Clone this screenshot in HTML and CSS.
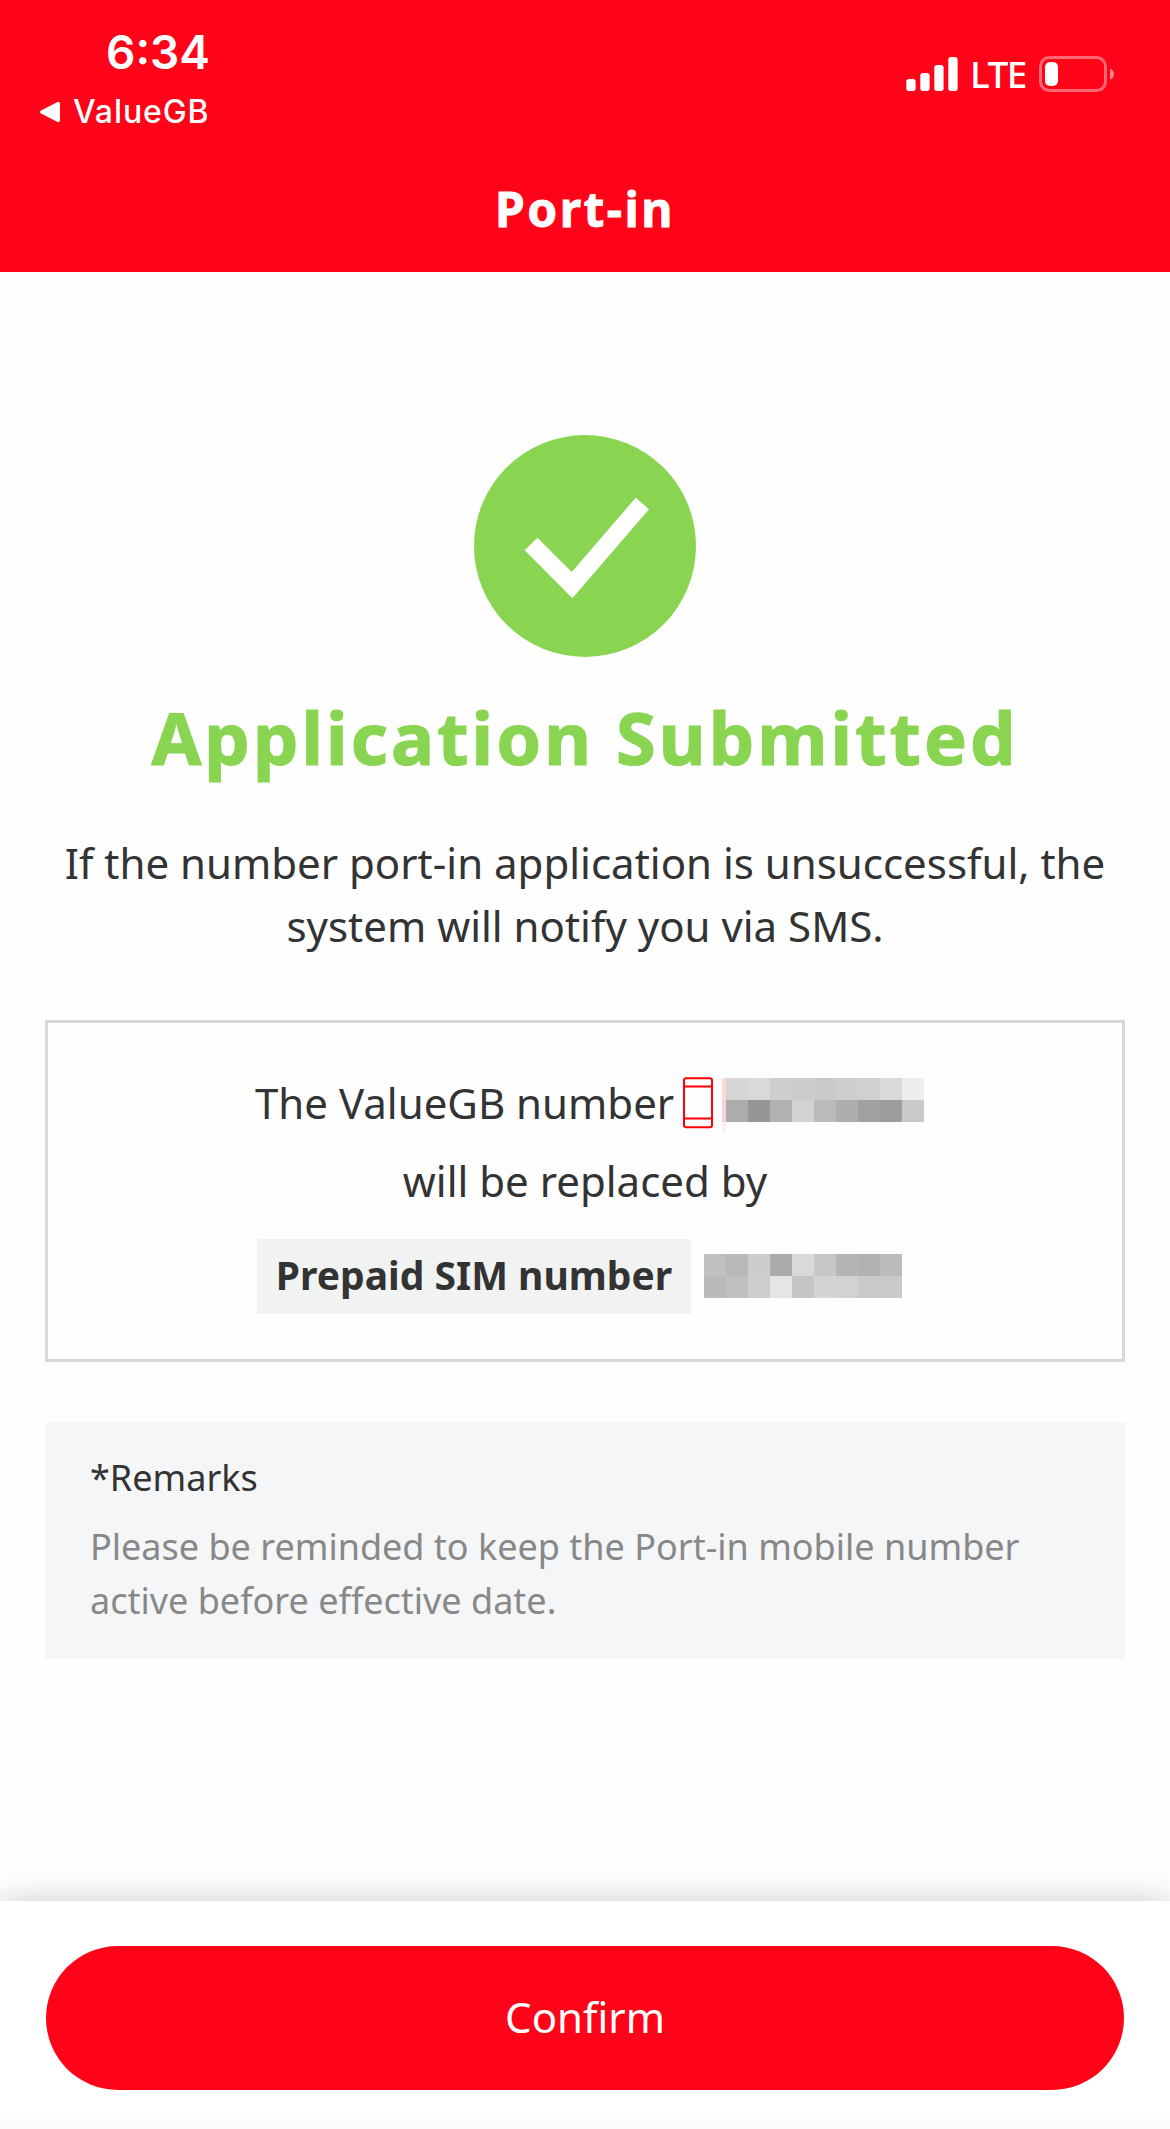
FILE: index.html
```html
<!DOCTYPE html>
<html lang="en">
<head>
    <meta charset="UTF-8">
    <meta name="viewport" content="width=device-width, initial-scale=1.0">
    <title>Port-in</title>
    <link rel="stylesheet" href="styles.css">
</head>
<body>
    <header class="header">
        <div class="status-bar">
            <div class="status-left">
                <div class="time">6:34</div>
                <div class="back-app">
                    <svg width="22" height="22" viewBox="0 0 22 22">
                        <path d="M2 9.5 L18 1.2 Q21 0 21 3 V19 Q21 22 18 20.8 L2 12.5 Q0 11 2 9.5Z" fill="#fff"/>
                    </svg>
                    <span>ValueGB</span>
                </div>
            </div>
            <div class="status-right">
                <svg class="signal" width="52" height="36" viewBox="0 0 52 36" fill="#fff">
                    <rect x="0.3" y="23" width="9.3" height="12" rx="2.8"/>
                    <rect x="14.3" y="17" width="9.3" height="18" rx="2.8"/>
                    <rect x="28.3" y="9" width="9.3" height="26" rx="2.8"/>
                    <rect x="42.3" y="1" width="9.3" height="34" rx="2.8"/>
                </svg>
                <span class="network">LTE</span>
                <svg class="battery" width="76" height="36" viewBox="0 0 76 36">
                    <rect x="1.5" y="1.5" width="65" height="33" rx="9" fill="none" stroke="#fff" stroke-opacity=".4" stroke-width="3"/>
                    <rect x="6" y="6" width="13" height="24" rx="5" fill="#fff"/>
                    <path d="M71 12.5 Q75 14 75 18 Q75 22 71 23.5Z" fill="#fff" fill-opacity=".5"/>
                </svg>
            </div>
        </div>
        <h1 class="page-title">Port-in</h1>
    </header>

    <main class="content">
        <svg class="check" width="222" height="222" viewBox="0 0 222 222">
            <circle cx="111" cy="111" r="111" fill="#89d552"/>
            <path d="M50.7 115.3 L63.4 102.7 L97.7 137 L161.7 62.7 L175 74.3 L98.4 163.3Z" fill="#fff"/>
        </svg>
        <h2 class="result">Application Submitted</h2>
        <p class="message">If the number port-in application is unsuccessful, the<br>system will notify you via SMS.</p>

        <section class="number-card">
            <div class="number-row">
                <span class="number-label">The ValueGB number</span>
                <svg class="box-icon" width="30" height="52" viewBox="0 0 30 52" fill="none" stroke="#ff0000" stroke-width="2">
                    <rect x="1" y="1.3" width="28" height="49" rx="2"/>
                    <path d="M1 9.5 H29 M1 41.5 H29" stroke-width="1.8"/>
                </svg>
                <!-- masked phone number -->
                <svg class="mask" width="216" height="69" viewBox="0 0 216 69" shape-rendering="crispEdges">
                    <rect width="216" height="69" fill="#fdfdfd"/>
                    <rect y="58" width="4" height="11" fill="#ffeeee"/>
                    <rect y="14" width="4" height="22" fill="#ffd8d8"/>
                    <rect y="36" width="4" height="22" fill="#f8d2d4"/>
                    <rect x="4" y="14" width="22" height="22" fill="#d6d6d6"/>
                    <rect x="26" y="14" width="22" height="22" fill="#d9d9d9"/>
                    <rect x="48" y="14" width="22" height="22" fill="#cecece"/>
                    <rect x="70" y="14" width="22" height="22" fill="#cccccc"/>
                    <rect x="92" y="14" width="22" height="22" fill="#cacaca"/>
                    <rect x="114" y="14" width="22" height="22" fill="#cecece"/>
                    <rect x="136" y="14" width="22" height="22" fill="#d0d0d0"/>
                    <rect x="158" y="14" width="22" height="22" fill="#dadada"/>
                    <rect x="180" y="14" width="22" height="22" fill="#eeeeee"/>
                    <rect x="4" y="36" width="22" height="22" fill="#acacac"/>
                    <rect x="26" y="36" width="22" height="22" fill="#969696"/>
                    <rect x="48" y="36" width="22" height="22" fill="#b1b1b1"/>
                    <rect x="70" y="36" width="22" height="22" fill="#d2d2d2"/>
                    <rect x="92" y="36" width="22" height="22" fill="#bbbbbb"/>
                    <rect x="114" y="36" width="22" height="22" fill="#aeaeae"/>
                    <rect x="136" y="36" width="22" height="22" fill="#a1a1a1"/>
                    <rect x="158" y="36" width="22" height="22" fill="#9d9d9d"/>
                    <rect x="180" y="36" width="22" height="22" fill="#c9c9c9"/>
                </svg>
            </div>
            <div class="replaced">will be replaced by</div>
            <div class="sim-row">
                <span class="sim-label">Prepaid SIM number</span>
                <svg width="198" height="44" viewBox="0 0 198 44" shape-rendering="crispEdges">
                    <rect x="0" y="0" width="22" height="22" fill="#c0c0c0"/>
                    <rect x="22" y="0" width="22" height="22" fill="#b9b9b9"/>
                    <rect x="44" y="0" width="22" height="22" fill="#cdcdcd"/>
                    <rect x="66" y="0" width="22" height="22" fill="#ababab"/>
                    <rect x="88" y="0" width="22" height="22" fill="#d9d9d9"/>
                    <rect x="110" y="0" width="22" height="22" fill="#c7c7c7"/>
                    <rect x="132" y="0" width="22" height="22" fill="#b5b5b5"/>
                    <rect x="154" y="0" width="22" height="22" fill="#b2b2b2"/>
                    <rect x="176" y="0" width="22" height="22" fill="#bcbcbc"/>
                    <rect x="0" y="22" width="22" height="22" fill="#bababa"/>
                    <rect x="22" y="22" width="22" height="22" fill="#c0c0c0"/>
                    <rect x="44" y="22" width="22" height="22" fill="#cecece"/>
                    <rect x="66" y="22" width="22" height="22" fill="#e5e5e5"/>
                    <rect x="88" y="22" width="22" height="22" fill="#c5c5c5"/>
                    <rect x="110" y="22" width="22" height="22" fill="#d3d3d3"/>
                    <rect x="132" y="22" width="22" height="22" fill="#d2d2d2"/>
                    <rect x="154" y="22" width="44" height="22" fill="#c9c9c9"/>
                </svg>
            </div>
        </section>

        <section class="remarks">
            <div class="remarks-title">*Remarks</div>
            <p class="remarks-text">Please be reminded to keep the Port-in mobile number<br>active before effective date.</p>
        </section>
    </main>

    <footer class="footer">
        <button class="confirm">Confirm</button>
    </footer>
</body>
</html>
```
FILE: styles.css
```css
* {
    box-sizing: border-box;
}
body {
    margin: 0;
    height: 2129px;
    display: flex;
    flex-direction: column;
    overflow: hidden;
    font-family: "Noto Sans", sans-serif;
    color: #333;
    background: #fefefe;
}
svg {
    display: block;
    flex: none;
}

/* header */
.header {
    height: 272px;
    flex: none;
    background: #ff0418;
    color: #fff;
}
.status-bar {
    height: 173px;
    display: flex;
    justify-content: space-between;
    padding: 24px 55px 0 39px;
}
.status-left {
    font-family: Inter, sans-serif;
}
.time {
    padding-left: 67px;
    font-size: 46px;
    line-height: 56px;
    font-weight: 600;
    letter-spacing: 0;
}
.back-app {
    display: flex;
    align-items: center;
    gap: 12px;
    margin-top: 12px;
    font-size: 32px;
    line-height: 40px;
    font-weight: 450;
    letter-spacing: 0.9px;
}
.status-right {
    display: flex;
    align-items: center;
    height: 36px;
    margin-top: 32px;
}
.network {
    margin: 0 13px 0 11px;
    width: 57px;
    padding-left: 1px;
    font-size: 37px;
    line-height: 36px;
    font-weight: 500;
    letter-spacing: -1.5px;
}
.page-title {
    margin: 0;
    text-align: center;
    font-size: 48px;
    line-height: 72px;
    font-weight: 700;
    letter-spacing: 2.4px;
    -webkit-text-stroke: 0.8px #fff;
}

/* content */
.content {
    flex: 1;
    padding: 163px 45px 0;
}
.check {
    margin: 0 auto;
}
.result {
    margin: 26px 0 0;
    text-align: center;
    font-size: 72px;
    line-height: 108px;
    font-weight: 700;
    letter-spacing: 3.1px;
    -webkit-text-stroke: 1.2px #89d552;
    color: #89d552;
}
.message {
    margin: 40px -20px 0;
    text-align: center;
    font-size: 42px;
    line-height: 63px;
}
.number-card {
    height: 342px;
    margin-top: 63px;
    padding-top: 41px;
    border: 3px solid #d8d8d8;
    font-size: 42px;
    line-height: 78px;
}
.number-row {
    display: flex;
    height: 78px;
    padding-left: 207px;
}
.number-label {
    width: 428px;
    white-space: nowrap;
}
.box-icon {
    margin-top: 13px;
}
.mask {
    margin-left: 9px;
}
.replaced {
    text-align: center;
}
.sim-row {
    display: flex;
    align-items: flex-start;
    gap: 13px;
    margin-top: 19px;
    padding-left: 209px;
}
.sim-row svg {
    margin-top: 15px;
}
.sim-label {
    width: 434px;
    height: 75px;
    text-align: center;
    font-size: 39px;
    line-height: 72px;
    font-weight: 700;
    white-space: nowrap;
    background: #f0f3f2;
}
.remarks {
    height: 237px;
    margin-top: 60px;
    padding: 29px 45px 0;
    font-size: 36px;
    line-height: 54px;
    background: #f4f6f8;
}
.remarks-text {
    margin: 15px 0 0;
    color: #888;
    white-space: nowrap;
}

/* footer */
.footer {
    height: 228px;
    flex: none;
    padding: 45px 46px 0;
    background: linear-gradient(#fff 210px, #fbfbfb);
    box-shadow: 0 0 30px rgba(0, 0, 0, 0.2);
}
.confirm {
    display: block;
    width: 100%;
    height: 144px;
    padding: 0 0 3px;
    border: none;
    border-radius: 72px;
    background: #ff0418;
    color: #fff;
    font-family: inherit;
    font-size: 42px;
}
```
